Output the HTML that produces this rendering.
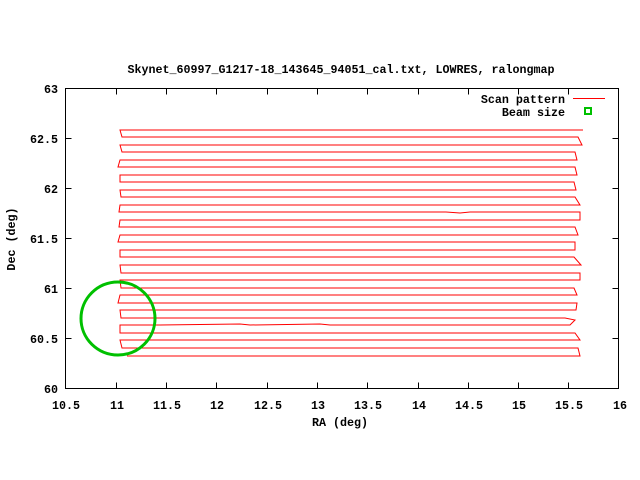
<!DOCTYPE html>
<html><head><meta charset="utf-8"><style>
html,body{margin:0;padding:0;background:#fff}
svg{display:block}
text{font-family:"Liberation Mono",monospace;font-weight:bold;font-size:11.7px;fill:#000}
</style></head><body>
<svg width="640" height="480" viewBox="0 0 640 480" xmlns="http://www.w3.org/2000/svg">
<text x="341" y="73" text-anchor="middle" textLength="427" lengthAdjust="spacingAndGlyphs">Skynet_60997_G1217-18_143645_94051_cal.txt, LOWRES, ralongmap</text>
<g stroke="#000" stroke-width="1" fill="none">
<rect x="65.5" y="88.5" width="553" height="300"/>
<path d="M65.5 88.5h6M65.5 138.5h6M65.5 188.5h6M65.5 238.5h6M65.5 288.5h6M65.5 338.5h6M618.5 88.5h-6M618.5 138.5h-6M618.5 188.5h-6M618.5 238.5h-6M618.5 288.5h-6M618.5 338.5h-6"/>
<path d="M116.5 388.5v-6M166.5 388.5v-6M216.5 388.5v-6M267.5 388.5v-6M317.5 388.5v-6M367.5 388.5v-6M418.5 388.5v-6M468.5 388.5v-6M518.5 388.5v-6M568.5 388.5v-6M116.5 88.5v6M166.5 88.5v6M216.5 88.5v6M267.5 88.5v6M317.5 88.5v6M367.5 88.5v6M418.5 88.5v6M468.5 88.5v6M518.5 88.5v6M568.5 88.5v6"/>
</g>
<g text-anchor="end">
<text x="58" y="93">63</text><text x="58" y="143">62.5</text><text x="58" y="193">62</text><text x="58" y="243">61.5</text><text x="58" y="293">61</text><text x="58" y="343">60.5</text><text x="58" y="393">60</text>
</g>
<g text-anchor="middle">
<text x="66" y="409">10.5</text><text x="117" y="409">11</text><text x="167" y="409">11.5</text><text x="217" y="409">12</text><text x="268" y="409">12.5</text><text x="318" y="409">13</text><text x="368" y="409">13.5</text><text x="419" y="409">14</text><text x="469" y="409">14.5</text><text x="519" y="409">15</text><text x="569" y="409">15.5</text><text x="620" y="409">16</text>
<text x="340" y="426">RA (deg)</text>
</g>
<text transform="translate(15,239) rotate(-90)" text-anchor="middle">Dec (deg)</text>
<text x="565" y="103" text-anchor="end">Scan pattern</text>
<text x="565" y="116" text-anchor="end">Beam size</text>
<line x1="573" y1="98.5" x2="605" y2="98.5" stroke="#f00" stroke-width="1"/>
<rect x="585" y="108" width="6" height="6" fill="none" stroke="#00c000" stroke-width="2"/>
<polyline fill="none" stroke="#f00" stroke-width="1" points="
583,130 140,130 120,130 122,137 578,137 582,145 200,145 120,145 122,152 575,152 577,160 120,160 118,167 575,167 577,175 120,175 120,182 574,182 576,190 120,190 121,197 575,197 580,205 120,205 119,212 446,212 460,213 470,212 580,212 580,220 120,220 119,227 575,227 578,235 120,235 118,242 575,242 575,250 120,250 120,257 574,257 581,265 120,265 121,273 580,273 580,280 120,280 121,288 574,288 577,295 120,295 118,303 577,303 576,310 120,310 121,318 565,318 575,320 570,325 330,325 320,324 250,325 240,324 160,325 120,325 120,333 575,333 580,340 120,340 122,348 578,348 580,356 127,356"/>
<ellipse cx="118" cy="318.5" rx="37" ry="36.5" fill="none" stroke="#00c000" stroke-width="3"/>
</svg>
</body></html>
